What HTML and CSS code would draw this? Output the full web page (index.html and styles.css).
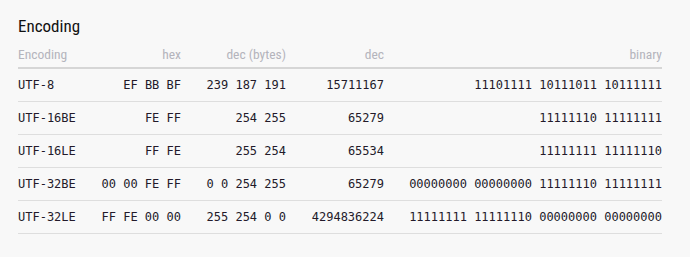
FILE: index.html
```html
<!DOCTYPE html>
<html>
<head>
<meta charset="utf-8">
<link rel="stylesheet" href="styles.css">
</head>
<body>
<section class="panel">
  <h2 class="title">Encoding</h2>
  <div class="table">
    <div class="row head">
      <div class="c left">Encoding</div>
      <div class="c">hex</div>
      <div class="c">dec (bytes)</div>
      <div class="c">dec</div>
      <div class="c">binary</div>
    </div>
    <div class="row">
      <div class="c left">UTF-8</div>
      <div class="c">EF BB BF</div>
      <div class="c">239 187 191</div>
      <div class="c">15711167</div>
      <div class="c">11101111 10111011 10111111</div>
    </div>
    <div class="row">
      <div class="c left">UTF-16BE</div>
      <div class="c">FE FF</div>
      <div class="c">254 255</div>
      <div class="c">65279</div>
      <div class="c">11111110 11111111</div>
    </div>
    <div class="row">
      <div class="c left">UTF-16LE</div>
      <div class="c">FF FE</div>
      <div class="c">255 254</div>
      <div class="c">65534</div>
      <div class="c">11111111 11111110</div>
    </div>
    <div class="row">
      <div class="c left">UTF-32BE</div>
      <div class="c">00 00 FE FF</div>
      <div class="c">0 0 254 255</div>
      <div class="c">65279</div>
      <div class="c">00000000 00000000 11111110 11111111</div>
    </div>
    <div class="row">
      <div class="c left">UTF-32LE</div>
      <div class="c">FF FE 00 00</div>
      <div class="c">255 254 0 0</div>
      <div class="c">4294836224</div>
      <div class="c">11111111 11111110 00000000 00000000</div>
    </div>
  </div>
</section>
</body>
</html>
```
FILE: styles.css
```css
html, body {
  margin: 0;
  padding: 0;
  background: #f8f8f8;
}
.panel {
  padding: 16px 28px 0 18px;
}
.title {
  margin: 0;
  font-family: "Roboto Condensed", Roboto, sans-serif;
  font-weight: 400;
  font-size: 17px;
  line-height: 20px;
  color: #111;
}
.table {
  margin-top: 10px;
  width: 644px;
}
.row {
  display: grid;
  grid-template-columns: 80px 83px 105px 98px 1fr;
  align-items: center;
  height: 32px;
  border-bottom: 1px solid #dedede;
  font-family: "DejaVu Sans Mono", monospace;
  font-size: 12px;
  color: #231a2a;
  white-space: pre;
}
.row.head {
  height: auto;
  align-items: end;
  padding-bottom: 5px;
  border-bottom: 2px solid #d6d6d6;
  font-family: "Roboto Condensed", Roboto, sans-serif;
  font-size: 13.5px;
  line-height: 16px;
  color: #b4b4bc;
}
.c {
  text-align: right;
}
.c.left {
  text-align: left;
}
```
